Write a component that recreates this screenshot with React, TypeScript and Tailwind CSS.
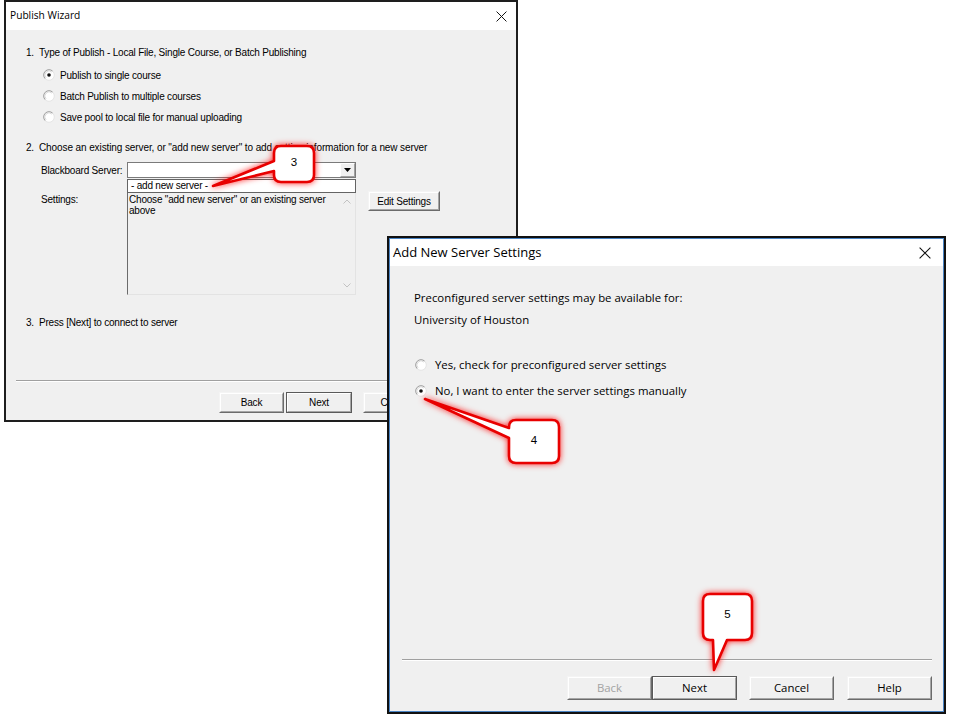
import React from "react";

const W1F = "font-['Liberation_Sans',Arial,sans-serif] text-[10px] tracking-[-0.2px] text-black";
const W2F = "font-['Open_Sans','Noto_Sans',sans-serif] text-[11.4px] text-black";

function Radio({ checked }: { checked?: boolean }) {
  return (
    <svg width="12" height="12" viewBox="0 0 12 12" className="shrink-0">
      <circle cx="6" cy="6" r="5.3" fill="#ffffff" />
      <path d="M2.25 9.75 A5.3 5.3 0 0 1 9.75 2.25" stroke="#9a9a9a" strokeWidth="1" fill="none" />
      <path d="M9.75 2.25 A5.3 5.3 0 0 1 2.25 9.75" stroke="#e4e4e4" strokeWidth="1" fill="none" />
      <path d="M3.1 8.9 A4.1 4.1 0 0 1 8.9 3.1" stroke="#d0d0d0" strokeWidth="0.8" fill="none" />
      {checked && <circle cx="6" cy="6" r="1.8" fill="#111" />}
    </svg>
  );
}

function CloseX({ size }: { size: number }) {
  return (
    <svg width={size} height={size} viewBox="0 0 10 10">
      <path d="M0.5 0.5 L9.5 9.5 M9.5 0.5 L0.5 9.5" stroke="#111" strokeWidth="0.9" />
    </svg>
  );
}

function Btn({
  label,
  w,
  h,
  def,
  disabled,
  font,
  className = "",
}: {
  label: string;
  w: string;
  h: string;
  def?: boolean;
  disabled?: boolean;
  font: string;
  className?: string;
}) {
  return (
    <div
      className={`${w} ${h} ${className} ${
        def
          ? "border border-[#5a5a5a]"
          : "border border-t-[#f4f4f4] border-l-[#f4f4f4] border-r-[#6b6b6b] border-b-[#6b6b6b]"
      } bg-[#f0f0f0] shrink-0`}
    >
      <div
        className={`h-full w-full border border-t-white border-l-white border-r-[#a5a5a5] border-b-[#a5a5a5] flex items-center justify-center ${font} ${
          disabled ? "!text-[#a3a3a3]" : ""
        }`}
      >
        {label}
      </div>
    </div>
  );
}

function Wizard() {
  return (
    <div className="absolute left-[4px] top-0 w-[514px] h-[422px] border-2 border-[#1e1e1e] flex flex-col">
      <div className="h-[28px] bg-white flex items-center justify-between pl-[4px] pr-[9px]">
        <span className="font-['Open_Sans','Noto_Sans',sans-serif] text-[10.2px] text-black">Publish Wizard</span>
        <CloseX size={11} />
      </div>
      <div className={`flex-1 bg-[#f0f0f0] flex flex-col ${W1F}`}>
        <div className="flex flex-col pl-[20px] pt-[12px]">
          <div className="h-[20px] flex items-center">
            <span className="w-[13px]">1.</span>
            <span>Type of Publish - Local File, Single Course, or Batch Publishing</span>
          </div>
          <div className="h-[20px] mt-[3px] flex items-center pl-[17px] gap-[5px]">
            <Radio checked />
            <span>Publish to single course</span>
          </div>
          <div className="h-[20px] mt-[1px] flex items-center pl-[17px] gap-[5px]">
            <Radio />
            <span>Batch Publish to multiple courses</span>
          </div>
          <div className="h-[20px] mt-[1px] flex items-center pl-[17px] gap-[5px]">
            <Radio />
            <span>Save pool to local file for manual uploading</span>
          </div>
          <div className="h-[20px] mt-[10px] flex items-center">
            <span className="w-[13px]">2.</span>
            <span className="tracking-[-0.1px]">Choose an existing server, or "add new server" to add setting information for a new server</span>
          </div>
          <div className="h-[16px] mt-[5px] flex items-center">
            <div className="w-[101px] pl-[15px]">Blackboard Server:</div>
            <div className="w-[229px] h-[16px] bg-white border border-[#7a7a7a] flex justify-end">
              <div className="w-[15px] h-full border border-t-white border-l-white border-r-[#a0a0a0] border-b-[#a0a0a0] bg-[#f0f0f0] flex items-center justify-center">
                <svg width="7" height="4" viewBox="0 0 7 4">
                  <path d="M0 0 H7 L3.5 4 Z" fill="#000" />
                </svg>
              </div>
            </div>
          </div>
          <div className="mt-[1px] flex">
            <div className="w-[101px] pl-[15px] pt-[14px] leading-[14px]">Settings:</div>
            <div className="w-[229px] flex flex-col">
              <div className="h-[14px] bg-white border border-[#646464] pl-[3px] leading-[12px]">- add new server -</div>
              <div className="h-[102px] border-l border-l-[#6b6b6b] border-r border-r-[#e3e3e3] border-b border-b-[#e3e3e3] flex">
                <div className="flex-1 pl-[1px] pt-[1px] leading-[11px] whitespace-nowrap">
                  Choose "add new server" or an existing server
                  <br />
                  above
                </div>
                <div className="w-[16px] flex flex-col items-center justify-between pt-[6px] pb-[6px]">
                  <svg width="8" height="5" viewBox="0 0 8 5">
                    <path d="M0.5 4.5 L4 1 L7.5 4.5" stroke="#c2c2c2" fill="none" />
                  </svg>
                  <svg width="8" height="5" viewBox="0 0 8 5">
                    <path d="M0.5 0.5 L4 4 L7.5 0.5" stroke="#c2c2c2" fill="none" />
                  </svg>
                </div>
              </div>
            </div>
            <Btn label="Edit Settings" w="w-[72px]" h="h-[20px]" font={W1F} className="ml-[12px] mt-[12px]" />
          </div>
          <div className="h-[20px] mt-[17px] flex items-center">
            <span className="w-[13px]">3.</span>
            <span>Press [Next] to connect to server</span>
          </div>
        </div>
        <div className="mt-[48px] mx-[10px] border-t border-t-[#a0a0a0] border-b border-b-white" />
        <div className="mt-[10px] flex pl-[213px]">
          <Btn label="Back" w="w-[65px]" h="h-[21px]" font={W1F} />
          <Btn label="Next" w="w-[66px]" h="h-[21px]" font={W1F} def className="ml-[2px]" />
          <Btn label="Cancel" w="w-[65px]" h="h-[21px]" font={W1F} className="ml-[11px]" />
          <Btn label="Help" w="w-[65px]" h="h-[21px]" font={W1F} className="ml-[11px]" />
        </div>
      </div>
    </div>
  );
}

function ServerDialog() {
  return (
    <div className="absolute left-[387px] top-[236px] w-[559px] h-[478px] border-2 border-[#111]">
      <div className="h-full border border-[#4a84c4] flex flex-col">
        <div className="h-[27px] bg-white flex items-center justify-between pl-[3px] pr-[12px]">
          <span className="font-['Open_Sans','Noto_Sans',sans-serif] text-[13px] text-black">Add New Server Settings</span>
          <CloseX size={12} />
        </div>
        <div className={`flex-1 bg-[#f0f0f0] flex flex-col ${W2F}`}>
          <div className="flex flex-col pl-[24px] pt-[23px]">
            <div className="h-[18px] flex items-center">Preconfigured server settings may be available for:</div>
            <div className="h-[18px] mt-[4px] flex items-center">University of Houston</div>
            <div className="h-[18px] mt-[27px] flex items-center pl-[1px] gap-[8px]">
              <Radio />
              <span>Yes, check for preconfigured server settings</span>
            </div>
            <div className="h-[18px] mt-[8px] flex items-center pl-[1px] gap-[8px]">
              <Radio checked />
              <span>No, I want to enter the server settings manually</span>
            </div>
          </div>
          <div className="flex-1" />
          <div className="ml-[12px] mr-[11px] border-t border-t-[#a0a0a0] border-b border-b-white" />
          <div className="mt-[15px] mb-[11px] flex justify-end pr-[11px]">
            <Btn label="Back" w="w-[85px]" h="h-[24px]" font={W2F} disabled />
            <Btn label="Next" w="w-[85px]" h="h-[24px]" font={W2F} def />
            <Btn label="Cancel" w="w-[85px]" h="h-[24px]" font={W2F} className="ml-[12px]" />
            <Btn label="Help" w="w-[85px]" h="h-[24px]" font={W2F} className="ml-[13px]" />
          </div>
        </div>
      </div>
    </div>
  );
}

function Callouts() {
  const p3 =
    "M281 146 H307 Q314 146 314 153 V175 Q314 182 307 182 H281 Q274 182 274 175 V171 L213 186 L274 161 V153 Q274 146 281 146 Z";
  const p4 =
    "M516 420 H552 Q559 420 559 427 V456 Q559 463 552 463 H516 Q509 463 509 456 V438 L425 399 L509 428 V427 Q509 420 516 420 Z";
  const p5 =
    "M710 594 H745 Q752 594 752 601 V633 Q752 640 745 640 H727 L714 670 L713 640 H710 Q703 640 703 633 V601 Q703 594 710 594 Z";
  return (
    <>
      <svg className="absolute left-0 top-0 pointer-events-none" width="960" height="720" viewBox="0 0 960 720">
        <defs>
          <filter id="glow" x="-50%" y="-50%" width="200%" height="200%">
            <feDropShadow dx="0" dy="0" stdDeviation="3" floodColor="#ff0000" floodOpacity="0.85" />
          </filter>
        </defs>
        {[p3, p4, p5].map((d, i) => (
          <path key={i} d={d} fill="#ffffff" stroke="#e80000" strokeWidth="2.6" strokeLinejoin="round" filter="url(#glow)" />
        ))}
      </svg>
      <span className="absolute left-[274px] top-[155px] w-[40px] text-center font-['Liberation_Sans',Arial,sans-serif] text-[11.5px] leading-[14px] text-black">
        3
      </span>
      <span className="absolute left-[509px] top-[433px] w-[50px] text-center font-['Liberation_Sans',Arial,sans-serif] text-[11.5px] leading-[14px] text-black">
        4
      </span>
      <span className="absolute left-[703px] top-[607px] w-[49px] text-center font-['Liberation_Sans',Arial,sans-serif] text-[11.5px] leading-[14px] text-black">
        5
      </span>
    </>
  );
}

export default function App() {
  return (
    <div className="relative w-[960px] h-[720px] bg-white overflow-hidden">
      <Wizard />
      <ServerDialog />
      <Callouts />
    </div>
  );
}
